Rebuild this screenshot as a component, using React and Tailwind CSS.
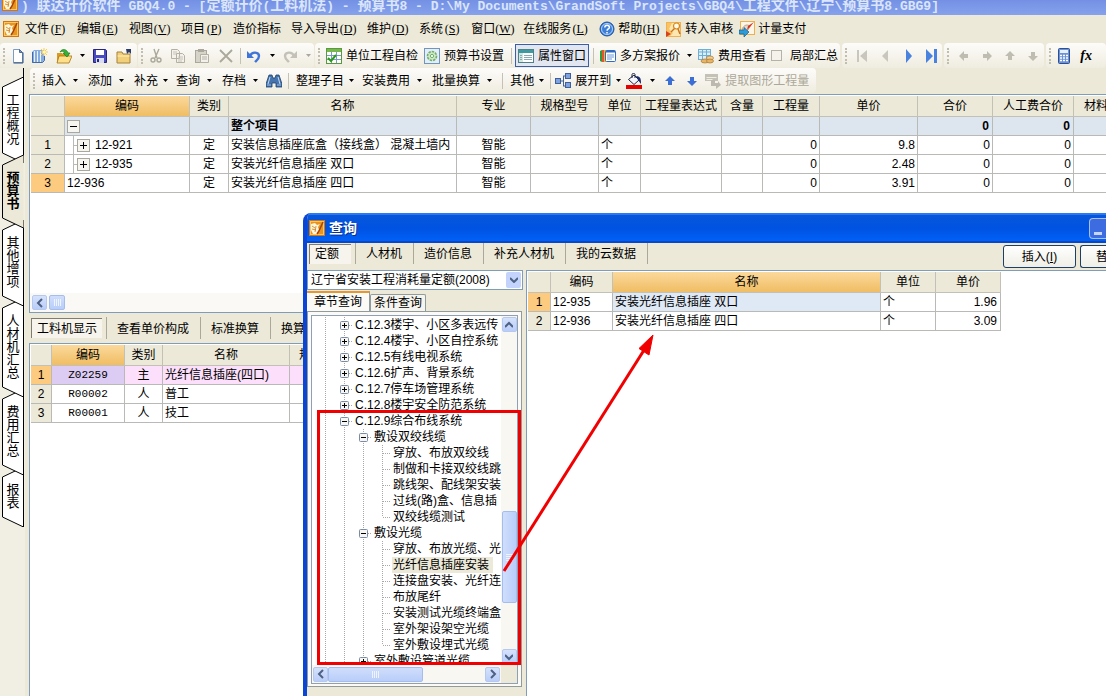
import React from "react";
import clsx from "clsx";

const menus = [
  { label: "文件", hotkey: "F" },
  { label: "编辑", hotkey: "E" },
  { label: "视图", hotkey: "V" },
  { label: "项目", hotkey: "P" },
  { label: "造价指标" },
  { label: "导入导出", hotkey: "D" },
  { label: "维护", hotkey: "D" },
  { label: "系统", hotkey: "S" },
  { label: "窗口", hotkey: "W" },
  { label: "在线服务", hotkey: "L" },
];

const sideTabs = ["工程概况", "预算书", "其他增项", "人材机汇总", "费用汇总", "报表"];

const columns = [
  { title: "编码", width: "w-[125px]" },
  { title: "类别", width: "w-[39px]" },
  { title: "名称", width: "w-[228px]" },
  { title: "专业", width: "w-[74px]" },
  { title: "规格型号", width: "w-[68px]" },
  { title: "单位", width: "w-[42px]" },
  { title: "工程量表达式", width: "w-[81px]" },
  { title: "含量", width: "w-[41px]" },
  { title: "工程量", width: "w-[57px]" },
  { title: "单价", width: "w-[98px]" },
  { title: "合价", width: "w-[75px]" },
  { title: "人工费合价", width: "w-[81px]" },
  { title: "材料费合价", width: "w-[81px]" },
];

const items = [
  { code: "12-921", name: "安装信息插座底盒（接线盒） 混凝土墙内", price: "9.8", child: true },
  { code: "12-935", name: "安装光纤信息插座 双口", price: "2.48", child: true },
  { code: "12-936", name: "安装光纤信息插座 四口", price: "3.91", child: false },
];

const resources = [
  { code: "Z02259", kind: "主", name: "光纤信息插座(四口)" },
  { code: "R00002", kind: "人", name: "普工" },
  { code: "R00001", kind: "人", name: "技工" },
];

const results = [
  { code: "12-935", name: "安装光纤信息插座 双口", price: "1.96" },
  { code: "12-936", name: "安装光纤信息插座 四口", price: "3.09" },
];

const tree = [
  { level: 1, text: "C.12.3楼宇、小区多表远传", mark: "plus" },
  { level: 1, text: "C.12.4楼宇、小区自控系统", mark: "plus" },
  { level: 1, text: "C.12.5有线电视系统", mark: "plus" },
  { level: 1, text: "C.12.6扩声、背景系统", mark: "plus" },
  { level: 1, text: "C.12.7停车场管理系统", mark: "plus" },
  { level: 1, text: "C.12.8楼宇安全防范系统", mark: "plus" },
  { level: 1, text: "C.12.9综合布线系统", mark: "minus" },
  { level: 2, text: "敷设双绞线缆", mark: "minus" },
  { level: 3, text: "穿放、布放双绞线" },
  { level: 3, text: "制做和卡接双绞线跳" },
  { level: 3, text: "跳线架、配线架安装" },
  { level: 3, text: "过线(路)盒、信息插" },
  { level: 3, text: "双绞线缆测试", last: true },
  { level: 2, text: "敷设光缆", mark: "minus" },
  { level: 3, text: "穿放、布放光缆、光" },
  { level: 3, text: "光纤信息插座安装", selected: true },
  { level: 3, text: "连接盘安装、光纤连" },
  { level: 3, text: "布放尾纤" },
  { level: 3, text: "安装测试光缆终端盒" },
  { level: 3, text: "室外架设架空光缆" },
  { level: 3, text: "室外敷设埋式光缆", last: true },
  { level: 2, text: "室外敷设管道光缆", mark: "plus" },
];

function Icon({ children, className }) {
  return (
    <svg viewBox="0 0 16 16" className={clsx("h-4 w-4 shrink-0", className)} aria-hidden="true">
      {children}
    </svg>
  );
}

function AppIcon() {
  return (
    <Icon>
      <rect x="0.5" y="0.5" width="15" height="15" fill="#fbc766" stroke="#d3760f" />
      <rect x="2" y="2" width="12" height="12" fill="#e8941e" />
      <path d="M2 4l4-1 2 2 3-1-2 3 1 3-2 4H4l-2-4z" fill="#fff6dc" />
      <path d="M3 6l3 2M3 9l4 1M7 6l-1 6" stroke="#c97a17" strokeWidth="0.8" />
      <path d="M14 2l-4 9-2 3" stroke="#a8430a" strokeWidth="1.500" fill="none" />
    </Icon>
  );
}

function NewIcon() {
  return (
    <Icon>
      <path d="M3.500 1.500h6l3 3v10h-9z" fill="#fff" stroke="#7d9cc4" />
      <path d="M9.500 1.500v3h3z" fill="#7f9cc9" stroke="#4a6d9e" />
      <path d="M13 4.500v10.500H3.500" stroke="#31527f" fill="none" />
    </Icon>
  );
}

function NewBookIcon() {
  return (
    <Icon>
      <path d="M0 4l2-2h10v11l-2 2H0z" fill="#86ade2" />
      <path d="M2.500 3v11M5.500 3v11M8.500 3v11" stroke="#e9f2fd" />
      <path d="M0.500 4v10.500h10l2-2V8" stroke="#446ba6" fill="none" />
      <path d="M12 0v8M8 4h8M9 1l6 6M15 1l-6 6" stroke="#f8cf4e" />
      <circle cx="12" cy="4" r="1.600" fill="#fff6c4" />
    </Icon>
  );
}

function OpenIcon() {
  return (
    <Icon>
      <path d="M1 5h5l1 1h6v9H1z" fill="#d99b20" />
      <path d="M3 8h13l-3 7H1z" fill="#ffe08a" stroke="#a87410" strokeWidth="0.8" />
      <path d="M4 4c2-4 7-3 8 1h2l-3 4-4-4h2c-1-2-3-2-5-1z" fill="#35b335" stroke="#167016" strokeWidth="0.6" />
    </Icon>
  );
}

function SaveIcon() {
  return (
    <Icon>
      <path d="M1.500 1.500h12l1 1v12h-13z" fill="#4b4bc0" stroke="#262680" />
      <rect x="4" y="2" width="8" height="5" fill="#fff" />
      <rect x="4" y="10" width="8" height="5" fill="#d9dcf5" />
      <rect x="5" y="11" width="2" height="3" fill="#262680" />
    </Icon>
  );
}

function FolderIcon() {
  return (
    <Icon>
      <path d="M1 4h5l1 2h7v9H1z" fill="#f2cf79" stroke="#a5823a" />
      <path d="M1.500 8h12" stroke="#fff0c0" />
      <path d="M10 1h5v5l-2-2-2 2z" fill="#2d3b66" />
    </Icon>
  );
}

function CutIcon() {
  return (
    <Icon>
      <path d="M6 1l3 9M11 1L7 10" stroke="#aaa89c" strokeWidth="1.400" />
      <circle cx="5" cy="12" r="2" fill="none" stroke="#aaa89c" strokeWidth="1.400" />
      <circle cx="11" cy="12" r="2" fill="none" stroke="#aaa89c" strokeWidth="1.400" />
    </Icon>
  );
}

function CopyIcon() {
  return (
    <Icon>
      <path d="M1.500 1.500h6l2 2v7h-8zM6.500 5.500h6l2 2v7h-8z" fill="#f3f1e9" stroke="#b3b1a6" />
      <path d="M3 4h4M3 6h3M8 9h5M8 11h5M8 13h4" stroke="#c5c3b8" />
    </Icon>
  );
}

function PasteIcon() {
  return (
    <Icon>
      <rect x="1.500" y="2.500" width="11" height="12" fill="#d6d4c9" stroke="#aaa89c" />
      <rect x="4" y="1" width="6" height="3" fill="#aaa89c" />
      <path d="M6.500 6.500h8v8h-8z" fill="#f3f1e9" stroke="#b3b1a6" />
      <path d="M8 9h5M8 11h5" stroke="#b3b1a6" />
    </Icon>
  );
}

function DeleteIcon() {
  return (
    <Icon>
      <path d="M2 2l12 12M14 2L2 14" stroke="#aaa89c" strokeWidth="1.800" />
    </Icon>
  );
}

function UndoIcon({ flip }) {
  return (
    <Icon className={flip && "-scale-x-100"}>
      <path d="M4 8c2-5 9-4 9 0 0 3-2 4-4 6" fill="none" stroke={flip ? "#c4c2b8" : "#3f74d8"} strokeWidth="2.400" />
      <path d="M1 3v7h7z" fill={flip ? "#c4c2b8" : "#3f74d8"} />
    </Icon>
  );
}

function CheckTableIcon() {
  return (
    <Icon>
      <rect x="0.500" y="0.500" width="15" height="15" fill="#fff" stroke="#5a9a3c" />
      <rect x="1" y="1" width="14" height="3" fill="#78b650" />
      <path d="M1 7.500h14M1 11.500h14M5.500 4v11M10.500 4v11" stroke="#7b9dc4" />
      <path d="M2 10l3 3 5-6" fill="none" stroke="#2b9a1e" strokeWidth="2" />
    </Icon>
  );
}

function GearIcon() {
  return (
    <Icon>
      <rect x="0.500" y="0.500" width="15" height="15" fill="#e3eef8" stroke="#7295bd" />
      <circle cx="8" cy="8" r="4.500" fill="#cfe8c3" stroke="#6fae6c" strokeWidth="1.600" strokeDasharray="2.400 1" />
      <circle cx="8" cy="8" r="1.600" fill="#fff" stroke="#6fae6c" />
    </Icon>
  );
}

function PropsIcon() {
  return (
    <Icon>
      <rect x="0.500" y="1.500" width="15" height="13" fill="#fff" stroke="#4e8188" />
      <rect x="1" y="2" width="14" height="3" fill="#3d9aa0" />
      <rect x="1" y="5" width="4" height="9" fill="#cfe7df" />
      <path d="M6 7.500h8M6 9.500h8M6 11.500h8M2 7.500h2M2 9.500h2M2 11.500h2" stroke="#8aa9b4" />
    </Icon>
  );
}

function PlansIcon() {
  return (
    <Icon>
      <path d="M0 3l2-1v12l-2-1z" fill="#2f9a3a" />
      <path d="M2 2h2v12H2z" fill="#e8542c" />
      <path d="M4 2h2v12H4z" fill="#f0b62c" />
      <rect x="5.500" y="2.500" width="10" height="11" rx="1" fill="#fff" stroke="#2f6bc4" />
      <path d="M6 3.500h9" stroke="#2f6bc4" strokeWidth="2" />
      <path d="M7 7h7M7 9h7M7 11h5" stroke="#6f97d4" />
    </Icon>
  );
}

function FeeIcon() {
  return (
    <Icon>
      <rect x="0.500" y="1.500" width="12" height="10" fill="#dceefb" stroke="#6fb0d0" />
      <path d="M1 4h12M4.500 2v9M8.500 2v9M1 7.500h12" stroke="#6fb0d0" />
      <ellipse cx="7" cy="13" rx="4" ry="2" fill="#e9b565" stroke="#a87732" strokeWidth="0.700" />
      <ellipse cx="12" cy="10" rx="3.500" ry="2" fill="#f5cf92" stroke="#a87732" strokeWidth="0.700" />
      <ellipse cx="12" cy="13" rx="3.500" ry="2" fill="#e9b565" stroke="#a87732" strokeWidth="0.700" />
    </Icon>
  );
}

function NavIcon({ shape, color }) {
  const paths = {
    first: "M3 2h2v12H3zM13 2v12L6 8z",
    prev: "M11 2v12L5 8z",
    next: "M6 1l6 7-6 7z",
    last: "M3 1l7 7-7 7zM11 1h3v14h-3z",
  };
  return (
    <Icon>
      <path d={paths[shape]} fill={color} />
    </Icon>
  );
}

function ArrowIcon({ turn, color }) {
  return (
    <Icon>
      <path
        d="M8 3l5 5h-3v4H6V8H3z"
        fill={color}
        transform={`rotate(${turn} 8 8)`}
      />
    </Icon>
  );
}

function CalcIcon() {
  return (
    <Icon>
      <rect x="2.500" y="0.500" width="11" height="15" rx="1" fill="#6b92d6" stroke="#2c4f93" />
      <rect x="4" y="2" width="8" height="3" fill="#e4f0fb" />
      <path d="M4 7.500h8M4 10h8M4 12.500h8" stroke="#fff" strokeWidth="1.400" strokeDasharray="2 1" />
    </Icon>
  );
}

function BinocularsIcon() {
  return (
    <Icon>
      <path d="M3 2h3l1 3h2l1-3h3l3 9v3h-6v-4H6v4H0v-3z" fill="#4573ad" stroke="#1e416f" strokeWidth="0.800" />
      <path d="M4 4l-2 7M12 4l2 7" stroke="#c3d9f2" />
      <path d="M1 12h4M11 12h4" stroke="#9dbde2" />
    </Icon>
  );
}

function ExpandIcon() {
  return (
    <Icon>
      <path d="M6 8h3M8.500 3v10M8 3h3M8 13h3" stroke="#44618f" fill="none" />
      <rect x="0.500" y="5.500" width="5" height="5" fill="#7fa3e0" stroke="#3f5f9a" />
      <rect x="10.500" y="0.500" width="5" height="5" fill="#7fa3e0" stroke="#3f5f9a" />
      <rect x="10.500" y="9.500" width="5" height="5" fill="#7fa3e0" stroke="#3f5f9a" />
    </Icon>
  );
}

function FillIcon() {
  return (
    <Icon>
      <rect x="0" y="12" width="16" height="4" fill="#e60000" />
      <path d="M2.500 6.500L8 2l5 5-5 4.500z" fill="#f4f6fb" stroke="#1c2340" />
      <path d="M6 5V1.500C6 0 9 0 9 1.500V5" fill="none" stroke="#1c2340" />
      <path d="M10 3c5 0 5 4 5 8l-3-4z" fill="#1d2d6e" />
    </Icon>
  );
}

function ExtractIcon() {
  return (
    <Icon>
      <path d="M0 1h13v7H0z" fill="#c4c2b7" />
      <path d="M1.500 4.500h10M1.500 6.500h6" stroke="#f0eee4" />
      <path d="M6 7h4v3h3V8l3 4-5 4v-3H6z" fill="#bcbab0" />
    </Icon>
  );
}

function HelpIcon() {
  return (
    <Icon>
      <circle cx="8" cy="8" r="7" fill="#3d7fd8" stroke="#1d4f9f" />
      <circle cx="8" cy="8" r="5.500" fill="none" stroke="#b5d3f6" />
      <path d="M5.800 6.500c0-3 4.600-3 4.600 0 0 1.500-2.300 1.500-2.300 3.200M8 11v1.600" fill="none" stroke="#fff" strokeWidth="1.500" />
    </Icon>
  );
}

// Transfer to audit: amber sheet with a magnifier
function AuditIcon() {
  return (
    <Icon>
      <rect x="0.500" y="1.500" width="14" height="14" fill="#fde7b0" stroke="#efb24e" />
      <path d="M1 2h5L3 8l4 4-3 3H1z" fill="#f8c265" />
      <circle cx="10.500" cy="5" r="3" fill="#fffbe9" stroke="#d9861c" strokeWidth="1.200" />
      <path d="M8.500 7.500L5 11M12 8l2 5" stroke="#c9701a" strokeWidth="1.400" />
      <path d="M0 10l5 3-5 3z" fill="#d9401c" />
    </Icon>
  );
}

function PaymentIcon() {
  return (
    <Icon>
      <rect x="1.500" y="0.500" width="14" height="13" fill="#fdf6e6" stroke="#eeb04a" />
      <path d="M3 8c2-4 5-5 8-3l-2 4-4 2z" fill="#e6d8cc" stroke="#a9836c" strokeWidth="0.700" />
      <path d="M15 1l-4 5-3 3 1-4z" fill="#d8321c" />
      <path d="M0 9h5V6.500l5 4.500-5 5v-3H0z" fill="#2e9ad6" stroke="#14608f" strokeWidth="0.700" />
    </Icon>
  );
}

function Caret({ width = "w-3", disabled }) {
  return (
    <span className={clsx("flex shrink-0 items-center justify-center", width)}>
      <svg viewBox="0 0 5 3" className="h-[3px] w-[5px]" aria-hidden="true">
        <path d="M0 0h5L2.500 3z" fill={disabled ? "#aaa89c" : "#000"} />
      </svg>
    </span>
  );
}

function Grip() {
  return (
    <span className="flex w-2 shrink-0 items-center justify-center">
      <span className="h-4 w-0 border-l-2 border-dotted border-[#c1beb0]" />
    </span>
  );
}

function Separator({ width = "w-2" }) {
  return (
    <span className={clsx("flex shrink-0 items-center justify-center", width)}>
      <span className="h-4 w-px bg-[#c5c2b5]" />
    </span>
  );
}

function Band({ children, className }) {
  return (
    <div
      className={clsx(
        "flex h-full shrink-0 items-stretch rounded-sm bg-linear-to-b from-[#fdfcfa] to-[#efecdf]",
        className
      )}
    >
      {children}
    </div>
  );
}

function IconButton({ label, width = "w-6", children }) {
  return (
    <button aria-label={label} className={clsx("flex shrink-0 items-center justify-center", width)}>
      {children}
    </button>
  );
}

function LabelButton({ icon, children, pressed, disabled }) {
  return (
    <button
      className={clsx(
        "flex shrink-0 items-center gap-1 px-[3px] whitespace-nowrap",
        pressed && "my-px bg-[#e1e6f0] outline -outline-offset-1 outline-[#3a5fa8]",
        disabled && "text-[#aca899]"
      )}
      disabled={disabled}
    >
      {icon}
      {children}
    </button>
  );
}

function DropButton({ children, tight }) {
  return (
    <button className="flex shrink-0 items-stretch pl-1 whitespace-nowrap">
      <span className="self-center">{children}</span>
      <Caret width={tight ? "w-[14px]" : "w-[18px]"} />
    </button>
  );
}

function MenuItem({ label, hotkey, icon }) {
  return (
    <button className="flex shrink-0 items-center whitespace-nowrap">
      {icon && <span className="mr-[3px]">{icon}</span>}
      {label}
      {hotkey && (
        <span className="w-[18px] text-center font-['Liberation_Serif',serif]">
          (<u>{hotkey}</u>)
        </span>
      )}
    </button>
  );
}

function TitleBar() {
  const latin = "font-['Liberation_Mono',monospace] text-[13px]";
  return (
    <header className="flex h-[15px] shrink-0 items-end overflow-hidden bg-linear-to-b from-[#7390e4] to-[#86a2ec] pl-[2px] text-[14px] leading-5 font-bold whitespace-pre text-[#dbe5fb]">
      <div className="flex h-5 items-start gap-[3px]">
        <AppIcon />
        <h1>
          <span className={latin}>) </span>联达计价软件
          <span className={latin}> GBQ4.0 - [</span>定额计价
          <span className={latin}>(</span>工料机法
          <span className={latin}>) - </span>预算书
          <span className={latin}>8 - D:\My Documents\GrandSoft Projects\GBQ4\</span>工程文件
          <span className={latin}>\</span>辽宁
          <span className={latin}>\</span>预算书
          <span className={latin}>8.GBG9]</span>
        </h1>
      </div>
    </header>
  );
}

function MenuBar() {
  return (
    <nav className="flex h-7 shrink-0 items-center gap-[6px] pl-[3px]">
      <AppIcon />
      <div className="flex items-center gap-[10px]">
        {menus.map((m) => (
          <MenuItem key={m.label} label={m.label} hotkey={m.hotkey} />
        ))}
        <MenuItem label="帮助" hotkey="H" icon={<HelpIcon />} />
      </div>
      <MenuItem label="转入审核" icon={<AuditIcon />} />
      <MenuItem label="计量支付" icon={<PaymentIcon />} />
    </nav>
  );
}

function MainToolbar() {
  return (
    <div className="flex h-[25px] shrink-0 gap-px overflow-hidden">
      <Band className="w-[137px]">
        <Grip />
        <IconButton label="新建" width="w-5"><NewIcon /></IconButton>
        <IconButton label="新建工程"><NewBookIcon /></IconButton>
        <IconButton label="打开"><OpenIcon /></IconButton>
        <Caret />
        <IconButton label="保存"><SaveIcon /></IconButton>
        <IconButton label="关闭"><FolderIcon /></IconButton>
      </Band>
      <Band className="w-[176px]">
        <Grip />
        <IconButton label="剪切" width="w-5"><CutIcon /></IconButton>
        <IconButton label="复制"><CopyIcon /></IconButton>
        <IconButton label="粘贴"><PasteIcon /></IconButton>
        <IconButton label="删除"><DeleteIcon /></IconButton>
        <Separator width="w-1" />
        <IconButton label="撤销"><UndoIcon /></IconButton>
        <Caret />
        <IconButton label="恢复"><UndoIcon flip /></IconButton>
        <Caret disabled />
      </Band>
      <Band className="mr-px">
        <Grip />
        <LabelButton icon={<CheckTableIcon />}>单位工程自检</LabelButton>
        <LabelButton icon={<GearIcon />}>预算书设置</LabelButton>
        <Separator />
        <LabelButton icon={<PropsIcon />} pressed>属性窗口</LabelButton>
        <Separator />
        <LabelButton icon={<PlansIcon />}>多方案报价</LabelButton>
        <Caret />
        <LabelButton icon={<FeeIcon />}>费用查看</LabelButton>
        <label className="flex shrink-0 items-center gap-2 px-0.5 whitespace-nowrap">
          <input type="checkbox" className="h-[11px] w-[11px] appearance-none border border-[#b5b3a7] bg-[#f4f2ea]" />
          局部汇总
        </label>
      </Band>
      <Band className="mr-px">
        <Grip />
        <IconButton label="首条" width="w-[23px]"><NavIcon shape="first" color="#c9c7bd" /></IconButton>
        <IconButton label="上一条" width="w-[23px]"><NavIcon shape="prev" color="#c9c7bd" /></IconButton>
        <IconButton label="下一条" width="w-[23px]"><NavIcon shape="next" color="#4a82e0" /></IconButton>
        <IconButton label="末条" width="w-[23px]"><NavIcon shape="last" color="#4a82e0" /></IconButton>
      </Band>
      <Band className="mr-px">
        <Grip />
        <IconButton label="左移" width="w-[23px]"><ArrowIcon turn={-90} color="#bfbdb2" /></IconButton>
        <IconButton label="右移" width="w-[23px]"><ArrowIcon turn={90} color="#bfbdb2" /></IconButton>
        <IconButton label="上移" width="w-[23px]"><ArrowIcon turn={0} color="#bfbdb2" /></IconButton>
        <IconButton label="下移" width="w-[23px]"><ArrowIcon turn={180} color="#bfbdb2" /></IconButton>
      </Band>
      <Band className="grow">
        <Grip />
        <IconButton label="计算器" width="w-5"><CalcIcon /></IconButton>
        <IconButton label="函数">
          <span className="font-['Liberation_Serif',serif] text-[14px] font-bold italic">fx</span>
        </IconButton>
      </Band>
    </div>
  );
}

function EditToolbar() {
  return (
    <div className="flex h-[25px] shrink-0 pl-[5px]">
      <Band className="pr-1">
        <Grip />
        <DropButton>插入</DropButton>
        <DropButton>添加</DropButton>
        <DropButton tight>补充</DropButton>
        <DropButton>查询</DropButton>
        <DropButton>存档</DropButton>
        <IconButton label="查找" width="w-5"><BinocularsIcon /></IconButton>
        <Separator />
        <DropButton tight>整理子目</DropButton>
        <DropButton>安装费用</DropButton>
        <DropButton>批量换算</DropButton>
        <Separator />
        <DropButton tight>其他</DropButton>
        <Separator width="w-1" />
        <LabelButton icon={<ExpandIcon />}>展开到</LabelButton>
        <Caret width="w-2" />
        <IconButton label="填充颜色"><FillIcon /></IconButton>
        <Caret />
        <IconButton label="上移"><ArrowIcon turn={0} color="#3c6fd6" /></IconButton>
        <IconButton label="下移" width="w-5"><ArrowIcon turn={180} color="#3c6fd6" /></IconButton>
        <LabelButton icon={<ExtractIcon />} disabled>提取图形工程量</LabelButton>
      </Band>
    </div>
  );
}

function SideTab({ text, index, active }) {
  // 13px per character plus the slanted ends
  const height = text.length * 13 + 34;
  return (
    <button
      className={clsx("relative w-[25px] shrink-0 pt-4 pb-[18px]", index > 0 && "-mt-2", active && "font-bold")}
      style={{ zIndex: active ? 20 : 10 - index }}
    >
      <svg
        viewBox={`0 0 25 ${height}`}
        className="absolute inset-0 h-full w-full"
        aria-hidden="true"
      >
        <path
          d={`M23.500 0L2.500 10V${height - 10}L23.500 ${height}${active ? "" : "Z"}`}
          fill={active ? "#ece9d8" : "#fff"}
          stroke="#000"
        />
      </svg>
      <span className="relative mx-auto block w-3 text-[13px] leading-[13px] break-all">
        {text}
      </span>
    </button>
  );
}

function SideTabs() {
  return (
    <aside className="flex w-[25px] shrink-0 flex-col bg-[#f1efe4]">
      <div className="h-[9px] w-6 shrink-0 border-r border-black" />
      {sideTabs.map((text, i) => (
        <SideTab key={text} text={text} index={i} active={i === 1} />
      ))}
    </aside>
  );
}

const cell = "overflow-hidden border-r border-b border-[#b9b9b5] p-0 whitespace-nowrap";
const headCell = "overflow-hidden border-r border-b border-[#c3c1b5] bg-[#ece9d8] p-0 text-center font-normal whitespace-nowrap";
const headActive = "bg-linear-to-b from-[#fbd99b] to-[#f0bd62]";
const table = "table-fixed border-separate border-spacing-0";

function ExpandBox({ open }) {
  return (
    <button
      aria-label={open ? "折叠" : "展开"}
      className="flex h-[13px] w-[13px] shrink-0 items-center justify-center border border-[#aaa89c] bg-[#f6f5f0]"
    >
      <svg viewBox="0 0 7 7" className="h-[7px] w-[7px]" aria-hidden="true">
        <path d={open ? "M0 3.500h7" : "M0 3.500h7M3.500 0v7"} stroke="#000" />
      </svg>
    </button>
  );
}

function BudgetTable() {
  return (
    <table className={clsx(table, "w-[1124px]")}>
      <thead>
        <tr className="h-[21px]">
          <th className={clsx(headCell, "w-[34px]")} />
          {columns.map((c, i) => (
            <th key={c.title} className={clsx(headCell, c.width, i === 0 && headActive)}>
              {c.title}
            </th>
          ))}
        </tr>
      </thead>
      <tbody>
        <tr className="h-[19px] bg-[#dde5ef] font-bold">
          <td className={clsx(cell, "bg-[#ece9d8]")} />
          <td className={clsx(cell, "pl-[2px]")}>
            <ExpandBox open />
          </td>
          <td className={cell} />
          <td className={clsx(cell, "pl-[2px]")}>整个项目</td>
          {columns.slice(3, 10).map((c) => (
            <td key={c.title} className={cell} />
          ))}
          <td className={clsx(cell, "pr-[3px] text-right")}>0</td>
          <td className={clsx(cell, "pr-[3px] text-right")}>0</td>
          <td className={cell} />
        </tr>
        {items.map((item, i) => (
          <tr key={item.code} className="h-[19px]">
            <td className={clsx(cell, "text-center", item.child ? "bg-[#ece9d8]" : "bg-[#fdcb80]")}>
              {i + 1}
            </td>
            <td className={cell}>
              {item.child ? (
                <div className="ml-2 flex h-[18px] items-center border-l border-[#b9b9b5]">
                  <span className="h-px w-[3px] bg-[#b9b9b5]" />
                  <ExpandBox />
                  <span className="ml-[5px]">{item.code}</span>
                </div>
              ) : (
                <span className="pl-[2px]">{item.code}</span>
              )}
            </td>
            <td className={clsx(cell, "text-center")}>定</td>
            <td className={clsx(cell, "pl-[2px]")}>{item.name}</td>
            <td className={clsx(cell, "text-center")}>智能</td>
            <td className={cell} />
            <td className={clsx(cell, "pl-[2px]")}>个</td>
            <td className={cell} />
            <td className={cell} />
            <td className={clsx(cell, "pr-[2px] text-right")}>0</td>
            <td className={clsx(cell, "pr-[2px] text-right")}>{item.price}</td>
            <td className={clsx(cell, "pr-[2px] text-right")}>0</td>
            <td className={clsx(cell, "pr-[2px] text-right")}>0</td>
            <td className={cell} />
          </tr>
        ))}
      </tbody>
    </table>
  );
}

function ResourceTable() {
  return (
    <table className={clsx(table, "w-[326px]")}>
      <thead>
        <tr className="h-[21px]">
          <th className={clsx(headCell, "w-[21px]")} />
          <th className={clsx(headCell, headActive, "w-[73px]")}>编码</th>
          <th className={clsx(headCell, "w-[38px]")}>类别</th>
          <th className={clsx(headCell, "w-[127px]")}>名称</th>
          <th className={clsx(headCell, "w-[67px]")}>规格型号</th>
        </tr>
      </thead>
      <tbody>
        {resources.map((r, i) => (
          <tr key={r.code} className={clsx("h-[19px]", i === 0 && "bg-[#fbdffb]")}>
            <td className={clsx(cell, "text-center", i === 0 ? "bg-[#fdcb80]" : "bg-[#ece9d8]")}>{i + 1}</td>
            <td
              className={clsx(
                cell,
                "text-center font-['Liberation_Mono',monospace] text-[11px]",
                i === 0 && "bg-[#dccbf2]"
              )}
            >
              {r.code}
            </td>
            <td className={clsx(cell, "text-center")}>{r.kind}</td>
            <td className={clsx(cell, "pl-[2px]")}>{r.name}</td>
            <td className={cell} />
          </tr>
        ))}
      </tbody>
    </table>
  );
}

function ResultTable() {
  return (
    <table className={clsx(table, "w-[473px]")}>
      <thead>
        <tr className="h-[21px]">
          <th className={clsx(headCell, "w-[23px]")} />
          <th className={clsx(headCell, "w-[62px]")}>编码</th>
          <th className={clsx(headCell, headActive, "w-[268px]")}>名称</th>
          <th className={clsx(headCell, "w-[55px]")}>单位</th>
          <th className={clsx(headCell, "w-[65px]")}>单价</th>
        </tr>
      </thead>
      <tbody>
        {results.map((r, i) => (
          <tr key={r.code} className="h-[19px]">
            <td className={clsx(cell, "text-center", i === 0 ? "bg-[#fdcb80]" : "bg-[#ece9d8]")}>{i + 1}</td>
            <td className={clsx(cell, "pl-[2px]")}>{r.code}</td>
            <td className={clsx(cell, "pl-[2px]", i === 0 && "bg-[#dfe8f5]")}>{r.name}</td>
            <td className={clsx(cell, "pl-[2px]")}>个</td>
            <td className={clsx(cell, "pr-[3px] text-right")}>{r.price}</td>
          </tr>
        ))}
      </tbody>
    </table>
  );
}

function ScrollButton({ dir }) {
  const paths = {
    left: "M6 1L2 5l4 4",
    right: "M2 1l4 4-4 4",
    up: "M0 7l4-4 4 4",
    down: "M0 3l4 4 4-4",
  };
  return (
    <button
      aria-label={dir}
      className="flex h-[15px] w-[15px] shrink-0 items-center justify-center rounded-xs border border-[#b4c8f0] bg-linear-to-b from-[#d6e2fc] to-[#b9cdf8]"
    >
      <svg viewBox="0 0 8 10" className="h-[10px] w-2" aria-hidden="true">
        <path d={paths[dir]} fill="none" stroke="#4d6185" strokeWidth="2" />
      </svg>
    </button>
  );
}

function Thumb({ className, vertical }) {
  return (
    <div
      className={clsx(
        "flex items-center justify-center gap-px rounded-xs border border-[#a5bcee] from-[#d0defc] to-[#b9cdf9]",
        vertical ? "flex-col bg-linear-to-r" : "bg-linear-to-b",
        className
      )}
    >
      {[0, 1, 2, 3].map((n) => (
        <span key={n} className={clsx("bg-[#eef4fe]", vertical ? "h-px w-[7px]" : "h-[7px] w-px")} />
      ))}
    </div>
  );
}

function StripTab({ children, active }) {
  return (
    <div className="flex shrink-0 items-center border-r border-[#aca899] pr-1 pl-[2px]">
      <button
        className={clsx(
          "h-5 border-t border-l text-left whitespace-nowrap",
          active ? "min-w-[42px] border-[#807d70] bg-[#f6f4ec] px-[5px]" : "border-transparent px-[7px]"
        )}
      >
        {children}
      </button>
    </div>
  );
}

function TreeLine() {
  return (
    <svg viewBox="0 0 19 16" className="h-4 w-[19px] shrink-0" aria-hidden="true">
      <path d="M9.500 0v16" stroke="#a8a8a8" strokeDasharray="1 1" />
    </svg>
  );
}

function TreeNode({ mark, last }) {
  return (
    <svg viewBox="0 0 19 16" className="h-4 w-[19px] shrink-0" aria-hidden="true">
      <path d={last ? "M9.500 0v8M10 8.500h8" : "M9.500 0v16M10 8.500h8"} stroke="#a8a8a8" strokeDasharray="1 1" fill="none" />
      {mark && (
        <>
          <rect x="5.500" y="4.500" width="8" height="8" rx="1" fill="#f7f6f2" stroke="#7b8ba5" />
          <path d={mark === "plus" ? "M7 8.500h5M9.500 6v5" : "M7 8.500h5"} stroke="#000" />
        </>
      )}
    </svg>
  );
}

function ChapterTree() {
  return (
    <div className="mx-[3px] mt-[3px] grid h-[369px] grid-cols-[189px_1fr] grid-rows-[349px_1fr] border border-[#8fa0b5] bg-white">
      <ul className="overflow-hidden pt-px">
        {tree.map((node) => (
          <li key={node.text} className="flex h-4 items-center pl-[4px] whitespace-nowrap">
            {Array.from({ length: node.level }, (_, i) => (
              <TreeLine key={i} />
            ))}
            <TreeNode mark={node.mark} last={node.last} />
            <button className={clsx("h-4 shrink-0 px-px", node.selected && "bg-[#ece9d8] pr-1")}>
              {node.text}
            </button>
          </li>
        ))}
      </ul>
      <div className="flex flex-col items-center bg-[#f8f7f2] py-px">
        <ScrollButton dir="up" />
        <div className="grow" />
        <Thumb vertical className="mb-[46px] h-[92px] w-[15px]" />
        <ScrollButton dir="down" />
      </div>
      <div className="flex items-center bg-[#f8f7f2] px-px">
        <ScrollButton dir="left" />
        <Thumb className="h-[15px] w-[95px]" />
        <div className="grow" />
        <ScrollButton dir="right" />
      </div>
      <div className="bg-[#ece9d8]" />
    </div>
  );
}

function QueryDialog() {
  return (
    <section
      aria-label="查询"
      className="absolute top-[213px] right-0 bottom-0 left-[303px] z-30 flex flex-col overflow-hidden rounded-tl-lg border-l-4 border-[#0a45d4] bg-[#ece9d8]"
    >
      <div className="flex h-[30px] shrink-0 items-center justify-between bg-linear-to-b from-[#0a58d8] via-[#0052e2] via-50% to-[#0063fb] shadow-[inset_0_2px_0_#2a7af5,inset_0_-2px_0_#0a47c8]">
        <h2 className="flex items-center gap-1 pl-[2px] text-[14px] font-bold text-white [text-shadow:1px_1px_#0a318f]">
          <AppIcon />
          查询
        </h2>
        <button
          aria-label="最小化"
          className="flex h-[21px] w-[17px] items-end rounded-l-sm border border-r-0 border-[#a7c0f5] bg-[#3c6ce0] pb-[3px] pl-1"
        >
          <span className="h-[3px] w-2 bg-[#c7d6f8]" />
        </button>
      </div>
      <div className="flex min-h-0 grow">
        {/* Chapter browser */}
        <div className="flex w-[216px] shrink-0 flex-col">
          <div className="flex h-[21px] shrink-0">
            <StripTab active>定额</StripTab>
            <StripTab>人材机</StripTab>
            <StripTab>造价信息</StripTab>
            <StripTab>补充人材机</StripTab>
            <StripTab>我的云数据</StripTab>
          </div>
          <div className="relative mt-[6px] h-[20px] shrink-0">
            <select
              aria-label="定额库"
              className="h-full w-full appearance-none border border-[#7f9db9] bg-white pl-[3px]"
            >
              <option>辽宁省安装工程消耗量定额(2008)</option>
            </select>
            <span className="pointer-events-none absolute top-[2px] right-[2px] flex h-4 w-[15px] items-center justify-center rounded-xs bg-[#c3d3fb]">
              <svg viewBox="0 0 8 6" className="h-[6px] w-2" aria-hidden="true">
                <path d="M0 1l4 4 4-4" fill="none" stroke="#4d6185" strokeWidth="2" />
              </svg>
            </span>
          </div>
          <div className="mt-px flex h-5 shrink-0 items-end">
            <button className="h-5 border-t-2 border-r border-[#e8962e] border-r-[#919b9c] bg-[#fbfaf7] px-[7px]">
              章节查询
            </button>
            <button className="h-[17px] rounded-t-xs border border-b-0 border-[#919b9c] bg-[#f5f4ee] px-[3px] leading-4">
              条件查询
            </button>
          </div>
          <div className="mr-px h-[376px] shrink-0 border border-[#919b9c] bg-[#fbfaf7]">
            <ChapterTree />
          </div>
        </div>
        {/* Search results */}
        <div className="ml-[3px] flex min-w-0 grow flex-col">
          <div className="flex h-[27px] shrink-0 items-center justify-end gap-1">
            <button className="h-[23px] w-[73px] rounded-[3px] border border-[#1d3f66] bg-linear-to-b from-white to-[#efeee6]">
              插入(<u>I</u>)
            </button>
            <button className="h-[23px] w-[26px] overflow-hidden rounded-l-[3px] border border-r-0 border-[#1d3f66] bg-linear-to-b from-white to-[#efeee6] pl-[15px] text-left whitespace-nowrap">
              替换
            </button>
          </div>
          <div className="grow overflow-hidden border-t border-l border-[#7f9db9] bg-white pt-px pl-px">
            <ResultTable />
          </div>
        </div>
      </div>
    </section>
  );
}

// Red frame and arrow drawn over the windows
function Annotation() {
  return (
    <>
      <div className="pointer-events-none absolute top-[410px] left-[317px] z-40 h-[255px] w-[204px] border-3 border-[#f00000]" />
      <svg
        viewBox="0 0 160 240"
        className="pointer-events-none absolute top-[334px] left-[500px] z-40 h-[240px] w-[160px]"
        aria-hidden="true"
      >
        <path d="M4 237L146 13" stroke="#f00000" strokeWidth="3" />
        <path d="M153 1L149 21L139 14.500z" fill="#f00000" stroke="#f00000" />
      </svg>
    </>
  );
}

export default function App() {
  return (
    <div className="relative flex h-screen flex-col overflow-hidden bg-[#ece9d8] font-['Liberation_Sans','Noto_Sans_CJK_SC',sans-serif] text-[12px] leading-4 text-black">
      <TitleBar />
      <MenuBar />
      <MainToolbar />
      <div className="flex min-h-0 grow">
        <SideTabs />
        <main className="flex min-w-0 grow flex-col">
          <EditToolbar />
          <div className="ml-1 mt-px flex h-[219px] shrink-0 flex-col overflow-hidden border-y border-l border-[#7f9db9] bg-white">
            <div className="grow overflow-hidden pt-px pl-px">
              <BudgetTable />
            </div>
            <div className="flex h-[19px] shrink-0 items-center gap-[2px] bg-[#faf9f6] pl-[2px]">
              <ScrollButton dir="left" />
              <Thumb className="h-[15px] w-4" />
            </div>
          </div>
          <div className="ml-1 flex h-[30px] shrink-0 items-center">
            <div className="flex h-[22px]">
              <StripTab active>工料机显示</StripTab>
              <StripTab>查看单价构成</StripTab>
              <StripTab>标准换算</StripTab>
              <StripTab>换算信息</StripTab>
            </div>
          </div>
          <div className="ml-1 grow overflow-hidden border-t border-l border-[#7f9db9] bg-white pt-px pl-px">
            <ResourceTable />
          </div>
        </main>
      </div>
      <QueryDialog />
      <Annotation />
    </div>
  );
}
